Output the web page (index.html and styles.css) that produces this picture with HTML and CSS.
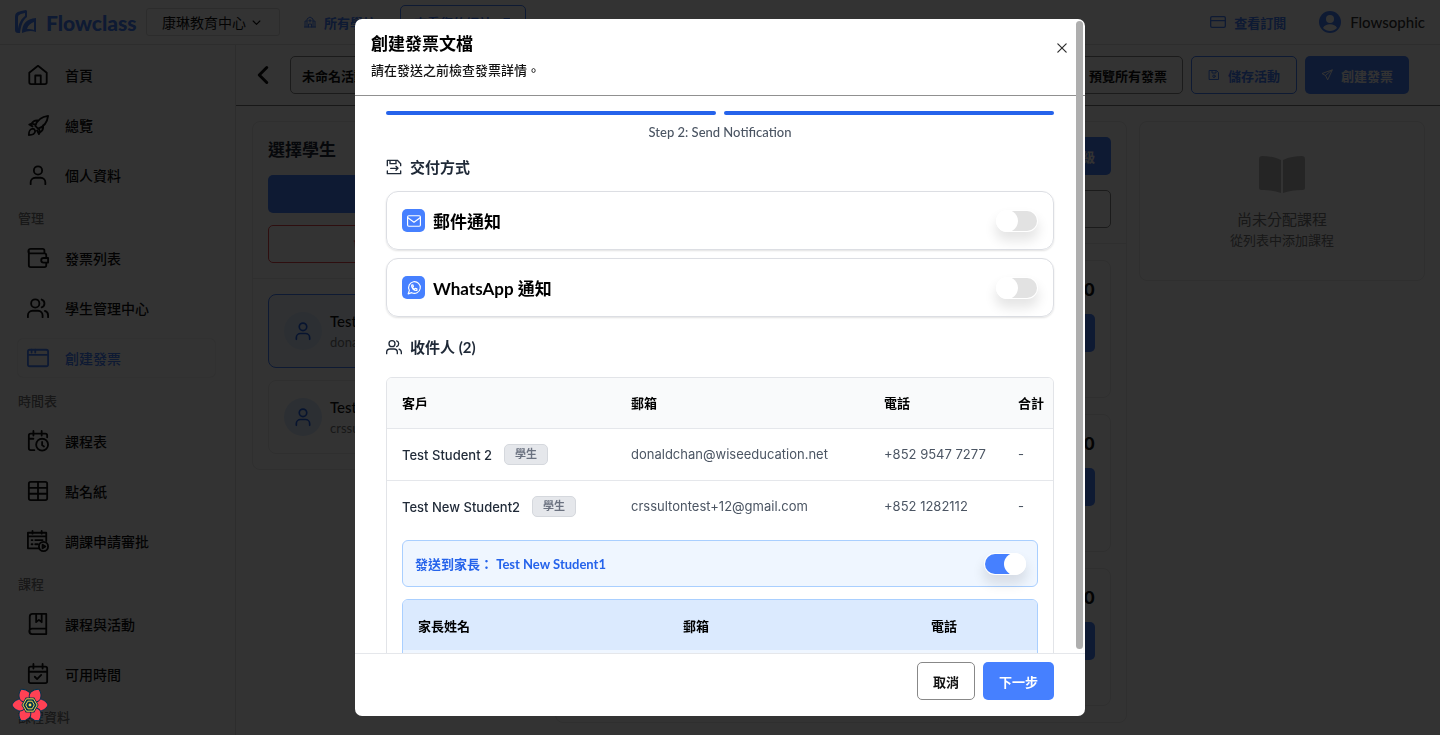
FILE: index.html
```html
<!DOCTYPE html>
<html lang="zh-Hant">
<head>
  <meta charset="UTF-8" />
  <meta name="viewport" content="width=device-width, initial-scale=1" />
  <title>Flowclass - 創建發票</title>
  <link rel="stylesheet" href="styles.css">
</head>
<body>
  <svg class="sprite" aria-hidden="true">
    <symbol id="i-home" viewBox="0 0 24 24"><path d="M2.500 9.500 12 2l9.500 7.500V20a2 2 0 0 1-2 2h-15a2 2 0 0 1-2-2zM9 22v-9.500h6V22"/></symbol>
    <symbol id="i-rocket" viewBox="0 0 24 24"><path d="M9 13c2-6 6-10 14-11-1 8-5 12-11 14zM9 13l3 3M9.500 11.500 5 10.500c1.500-3 4-4 7.500-3.500M13 15.500l1 4.500c3-1.500 4-4 3.500-7.500M14 20l-1 2-2-4M5 10.500l-2.500 1L6 13.500M6.500 16c-4 .5-4.500 3-4.500 7 4 0 6.500-.5 7-4.500-.5-1.500-1.500-2.500-2.500-2.500z"/></symbol>
    <symbol id="i-user" viewBox="0 0 24 24"><circle cx="12" cy="7" r="4.500"/><path d="M4 22v-2a5 5 0 0 1 5-5h6a5 5 0 0 1 5 5v2"/></symbol>
    <symbol id="i-wallet" viewBox="0 0 24 24"><path d="M19 7V4a2 2 0 0 0-2-2H4a2 2 0 0 0 0 5h15a2 2 0 0 1 2 2v3M2 4v16a2 2 0 0 0 2 2h15a2 2 0 0 0 2-2v-3M23 12h-5a2.500 2.500 0 0 0 0 5h5z"/></symbol>
    <symbol id="i-users" viewBox="0 0 24 24"><circle cx="9" cy="7" r="4.500"/><path d="M1 22v-2a5 5 0 0 1 5-5h6a5 5 0 0 1 5 5v2M16 2.800a4.500 4.500 0 0 1 0 8.500M23 22v-2a5 5 0 0 0-3.500-4.800"/></symbol>
    <symbol id="i-window" viewBox="0 0 24 24"><rect x="1" y="3" width="22" height="18" rx="2"/><path d="M1 8.500h22M5 3v3M9 3v3"/></symbol>
    <symbol id="i-cal-clock" viewBox="0 0 24 24"><path d="M22 8V6a2 2 0 0 0-2-2H4a2 2 0 0 0-2 2v14a2 2 0 0 0 2 2h4M7 1v5M16 1v5M2 9.500h5"/><circle cx="16.500" cy="16" r="6.500"/><path d="M16.500 13v3.500l2 1.500"/></symbol>
    <symbol id="i-table" viewBox="0 0 24 24"><rect x="2" y="2" width="20" height="20" rx="2"/><path d="M2 8.500h20M2 15h20M12 2v20"/></symbol>
    <symbol id="i-cal-play" viewBox="0 0 24 24"><path d="M13 20H1V3h20v9M1 7h20M6 1v3M16 1v3M5 11h1M9 11h8M5 15.500h1M9 15.500h3"/><circle cx="18" cy="18" r="5"/><path d="M17 16v4l3-2z"/></symbol>
    <symbol id="i-book" viewBox="0 0 24 24"><path d="M21 17H5.500a2.500 2.500 0 0 0 0 6H21V1H6a3 3 0 0 0-3 3v16M10 1v9l3-2.500 3 2.500V1"/></symbol>
    <symbol id="i-cal-check" viewBox="0 0 24 24"><rect x="2" y="4" width="20" height="18" rx="2"/><path d="M7 1v5M17 1v5M2 9.500h20M8.500 15l2.500 2.500 4.500-4.500"/></symbol>
    <symbol id="i-trash" viewBox="0 0 24 24"><path d="M2 6h20M8 6V2h8v4M4 6l1 16h14l1-16M10 11v6M14 11v6"/></symbol>
  </svg>

  <header class="topbar">
    <a href="#" class="logo">
      <svg width="24" height="24" viewBox="0 0 24 24" aria-hidden="true">
        <path class="logo-fill" d="M1 7c0-4 2-5 6-6l5-1 1 1v6c-4 3-6 8-7 16H4c-2 0-3-1-3-3z"/>
        <path class="logo-cut" d="M4 8c0-3 1-3 3-4l4-1v3C7 9 5 13 4 19z"/>
        <path class="logo-fill" d="M8 23C8 14 12 9 22 8v14c-5-2-9-1-14 1z"/>
        <path class="logo-cut" d="M13 19c1-4 4-6 7-7v8c-2-1-4-1-7-1z"/>
      </svg>
      <span>Flowclass</span>
    </a>
    <div class="center-select">
      <select aria-label="教育中心"><option>康琳教育中心</option></select>
      <svg class="icon chevron" viewBox="0 0 24 24" aria-hidden="true"><path d="m3 8 9 9 9-9"/></svg>
    </div>
    <a href="#" class="top-link schools">
      <svg class="icon icon-sm" viewBox="0 0 24 24" aria-hidden="true"><path d="M1 22h22M2 22V10h4M22 22V10h-4M6 22V6l6-4 6 4v16M9 22v-6h6v6M12 7v5M9.500 9.500h5"/></svg>
      所有學校
    </a>
    <a href="#" class="site-link">查看您的網站
      <svg class="icon icon-sm" viewBox="0 0 24 24" aria-hidden="true"><path d="M5 19 19 5M8 5h11v11"/></svg>
    </a>
    <a href="#" class="top-link plan">
      <svg class="icon icon-md" viewBox="0 0 24 24" aria-hidden="true"><rect x="1" y="4" width="22" height="16" rx="2"/><path d="M1 10h22"/></svg>
      查看訂閱
    </a>
    <a href="#" class="account">
      <svg width="22" height="22" viewBox="0 0 22 22" aria-hidden="true"><circle class="logo-fill" cx="11" cy="11" r="11"/><circle class="logo-cut" cx="11" cy="8" r="4"/><path class="logo-cut" d="M4 17c2-5 12-5 14 0-4 4-10 4-14 0z"/></svg>
      Flowsophic
    </a>
  </header>

  <div class="layout">
    <nav class="sidebar">
      <a href="#" class="nav-item"><svg class="icon"><use href="#i-home"/></svg>首頁</a>
      <a href="#" class="nav-item"><svg class="icon"><use href="#i-rocket"/></svg>總覽</a>
      <a href="#" class="nav-item"><svg class="icon"><use href="#i-user"/></svg>個人資料</a>
      <p class="nav-label">管理</p>
      <a href="#" class="nav-item"><svg class="icon"><use href="#i-wallet"/></svg>發票列表</a>
      <a href="#" class="nav-item"><svg class="icon"><use href="#i-users"/></svg>學生管理中心</a>
      <a href="#" class="nav-item active"><svg class="icon"><use href="#i-window"/></svg>創建發票</a>
      <p class="nav-label">時間表</p>
      <a href="#" class="nav-item"><svg class="icon"><use href="#i-cal-clock"/></svg>課程表</a>
      <a href="#" class="nav-item"><svg class="icon"><use href="#i-table"/></svg>點名紙</a>
      <a href="#" class="nav-item"><svg class="icon"><use href="#i-cal-play"/></svg>調課申請審批</a>
      <p class="nav-label">課程</p>
      <a href="#" class="nav-item"><svg class="icon"><use href="#i-book"/></svg>課程與活動</a>
      <a href="#" class="nav-item"><svg class="icon"><use href="#i-cal-check"/></svg>可用時間</a>
      <p class="nav-label">課程資料</p>
    </nav>

    <main class="main">
      <div class="toolbar">
        <button class="back" aria-label="返回"><svg class="icon" viewBox="0 0 24 24"><path d="M17 2 7 12l10 10"/></svg></button>
        <input class="field name-field" type="text" value="未命名活動" aria-label="活動名稱">
        <button class="btn btn-dark">預覽所有發票</button>
        <button class="btn btn-outline"><svg class="icon icon-sm" viewBox="0 0 24 24"><path d="M3 3h14l4 4v14H3zM8 3v5h8V3"/><circle cx="12" cy="14.500" r="2.500"/></svg>儲存活動</button>
        <button class="btn btn-primary"><svg class="icon icon-sm" viewBox="0 0 24 24"><path d="M22 2 2 9l7 4 4 8zM22 2 9 13"/></svg>創建發票</button>
      </div>

      <div class="columns">
        <section class="card">
          <div class="card-head">
            <h2>選擇學生</h2>
            <button class="btn btn-primary">添加學生</button>
            <button class="btn btn-red"><svg class="icon icon-sm"><use href="#i-trash"/></svg>清除已選擇</button>
          </div>
          <div class="students">
            <div class="student selected">
              <span class="avatar"><svg class="icon"><use href="#i-user"/></svg></span>
              <div><b>Test Student 2</b><small>donaldchan@wiseeducation.net</small></div>
            </div>
            <div class="student">
              <span class="avatar"><svg class="icon"><use href="#i-user"/></svg></span>
              <div><b>Test New Student2</b><small>crssultontest+12@gmail.com</small></div>
            </div>
          </div>
        </section>

        <section class="card">
          <div class="card-head class-head">
            <button class="btn btn-primary">新增班級</button>
            <input class="field" type="text" aria-label="搜尋課程">
          </div>
          <div class="classes">
            <div class="class-card"><span class="price">$0</span><button class="btn btn-primary">添加</button></div>
            <div class="class-card"><span class="price">$0</span><button class="btn btn-primary">添加</button></div>
            <div class="class-card"><span class="price">$0</span><button class="btn btn-primary">添加</button></div>
          </div>
        </section>

        <section class="card empty">
          <svg width="46" height="38" viewBox="0 0 46 38" aria-hidden="true"><path d="M0 3c0-2 1-3 3-3 7 0 13 1 19 4v33c-6-2-12-3-20-3-1 0-2-1-2-2zM46 3c0-2-1-3-3-3-7 0-13 1-19 4v33c6-2 12-3 20-3 1 0 2-1 2-2z"/></svg>
          <p class="empty-title">尚未分配課程</p>
          <p class="empty-text">從列表中添加課程</p>
        </section>
      </div>
    </main>
  </div>

  <div class="backdrop">
    <div class="modal" role="dialog" aria-modal="true" aria-labelledby="modal-title">
      <div class="modal-head">
        <div>
          <h1 id="modal-title">創建發票文檔</h1>
          <p>請在發送之前檢查發票詳情。</p>
        </div>
        <button class="close" aria-label="關閉"><svg class="icon" viewBox="0 0 24 24"><path d="m2 2 20 20M22 2 2 22"/></svg></button>
      </div>

      <div class="modal-body">
        <div class="steps"><span></span><span></span></div>
        <p class="step-text">Step 2: Send Notification</p>

        <h2 class="section-title">
          <svg class="icon" viewBox="0 0 24 24"><path d="M2 10V2h15l5 5v3M6 2v5h9V2M2 18v4h20v-4M7 14h11M15 11l3 3-3 3"/></svg>
          交付方式
        </h2>
        <label class="channel">
          <span class="channel-icon"><svg class="icon" viewBox="0 0 24 24"><rect x="1" y="3" width="22" height="18" rx="2"/><path d="m1 6 11 8 11-8"/></svg></span>
          <span class="channel-name">郵件通知</span>
          <input type="checkbox" class="switch">
        </label>
        <label class="channel">
          <span class="channel-icon"><svg class="icon" viewBox="0 0 24 24"><path d="m2 22 2-6a10 10 0 1 1 4 4z"/><path d="M8 7c-1 5 4 10 9 9v-2.500l-3-1-1 1.500c-2-1-3-2-3.500-3.500l1.500-1L10 6.500z"/></svg></span>
          <span class="channel-name">WhatsApp 通知</span>
          <input type="checkbox" class="switch">
        </label>

        <h2 class="section-title recipients-title">
          <svg class="icon"><use href="#i-users"/></svg>
          收件人 (2)
        </h2>
        <div class="table-box">
          <table class="recipients">
            <colgroup><col><col class="col-mail"><col class="col-phone"><col class="col-total"></colgroup>
            <thead>
              <tr><th>客戶</th><th>郵箱</th><th>電話</th><th>合計</th></tr>
            </thead>
            <tbody>
              <tr><td class="client"><span>Test Student 2</span><span class="badge">學生</span></td><td>donaldchan@wiseeducation.net</td><td>+852 9547 7277</td><td>-</td></tr>
              <tr><td class="client"><span>Test New Student2</span><span class="badge">學生</span></td><td>crssultontest+12@gmail.com</td><td>+852 1282112</td><td>-</td></tr>
            </tbody>
          </table>
          <div class="parents">
            <label class="parent-toggle">
              <span>發送到家長： Test New Student1</span>
              <input type="checkbox" class="switch" checked>
            </label>
            <div class="parent-box">
              <table>
                <colgroup><col><col class="col-parent-mail"><col class="col-parent-phone"></colgroup>
                <thead>
                  <tr><th>家長姓名</th><th>郵箱</th><th>電話</th></tr>
                </thead>
                <tbody>
                  <tr><td></td><td></td><td></td></tr>
                </tbody>
              </table>
            </div>
          </div>
        </div>
      </div>

      <div class="modal-foot">
        <button class="btn btn-cancel">取消</button>
        <button class="btn btn-primary">下一步</button>
      </div>
      <span class="scroll-thumb"></span>
    </div>
  </div>

  <button class="devtools" aria-label="Open React Query Devtools">
    <svg width="38" height="38" viewBox="0 0 40 40">
      <g id="petals">
        <path id="petal" d="M24 20c1-5 5-7 8-6 4 1 6 4 7 6-1 2-3 5-7 6-3 1-7-1-8-6z"/>
        <use href="#petal" transform="rotate(60 20 20)"/>
        <use href="#petal" transform="rotate(120 20 20)"/>
        <use href="#petal" transform="rotate(180 20 20)"/>
        <use href="#petal" transform="rotate(240 20 20)"/>
        <use href="#petal" transform="rotate(300 20 20)"/>
      </g>
      <path class="core" d="m11 20 4.500-8h9l4.500 8-4.500 8h-9z"/>
      <path class="ring" d="m12.500 20 3.750-6.500h7.500L27.500 20l-3.750 6.500h-7.500z"/>
      <path class="ring" d="m15.500 20 2.250-4h4.500l2.250 4-2.250 4h-4.500z"/>
      <circle class="dot" cx="20" cy="20" r="1.500"/>
    </svg>
  </button>
</body>
</html>
```
FILE: styles.css
```css
* { box-sizing: border-box; }
body { margin: 0; height: 100vh; overflow: hidden; display: flex; flex-direction: column; background: #fff; color: #111; font-family: Lato, "Noto Sans CJK TC", sans-serif; font-size: 13px; }
h1, h2, p { margin: 0; }
a { color: inherit; text-decoration: none; }
button, input, select { font: inherit; color: inherit; }
button { cursor: pointer; }

.sprite { position: absolute; width: 0; height: 0; }
.icon { width: 22px; height: 22px; flex: none; fill: none; stroke: currentColor; stroke-width: 2; stroke-linecap: round; stroke-linejoin: round; overflow: visible; }
.icon-sm { width: 12px; height: 12px; }
.icon-md { width: 16px; height: 16px; }

/* top bar */
.topbar { flex: none; height: 45px; display: flex; align-items: center; padding: 0 15px 0 14px; border-bottom: 1px solid #e0e0e0; }
.logo { display: flex; align-items: center; gap: 8px; width: 132px; color: #4680ff; font-size: 21px; font-weight: 900; }
.logo-fill { fill: #4680ff; }
.logo-cut { fill: #fff; }
.center-select { position: relative; width: 134px; }
.center-select select { width: 100%; height: 28px; padding: 0 15px; border: 1px solid #ddd; border-radius: 3px; background: #fff; appearance: none; font-size: 14px; }
.chevron { position: absolute; right: 19px; top: 10px; width: 9px; height: 9px; stroke-width: 3; pointer-events: none; }
.top-link { display: flex; align-items: center; gap: 8px; color: #4680ff; font-weight: 700; }
.schools { margin-left: 24px; }
.site-link { display: flex; align-items: center; gap: 8px; height: 34px; margin-left: 24px; padding: 0 13px; border: 1px solid #4680ff; border-radius: 5px; color: #4680ff; font-weight: 700; }
.plan { margin-left: auto; }
.account { display: flex; align-items: center; gap: 9px; margin-left: 33px; font-size: 15px; font-weight: 500; color: #333; }

/* sidebar */
.layout { flex: 1; display: flex; min-height: 0; }
.sidebar { flex: none; width: 236px; display: flex; flex-direction: column; gap: 12px; padding: 11px 20px 0 18px; border-right: 1px solid #e0e0e0; overflow: hidden; }
.nav-item { flex: none; display: flex; align-items: center; gap: 16px; height: 38px; padding: 0 9px; border-radius: 5px; font-size: 14px; font-weight: 500; }
.nav-item.active { background: #fff; color: #4680ff; box-shadow: 0 0 2px #ccc; }
.nav-label { flex: none; padding-top: 3px; line-height: 18px; font-size: 13px; font-weight: 500; color: #777; }

/* main */
.main { flex: 1; min-width: 0; }
.toolbar { display: flex; align-items: center; gap: 8px; height: 61px; padding: 0 31px 0 18px; border-bottom: 1px solid #777; }
.back { display: flex; padding: 0; border: 0; background: none; margin-right: 10px; }
.back .icon { width: 18px; height: 18px; stroke-width: 4; }
.field { height: 38px; padding: 0 11px; border: 1px solid #888; border-radius: 5px; background: #fff; font-weight: 700; }
.name-field { width: 240px; margin-right: auto; }
.btn { display: flex; align-items: center; justify-content: center; gap: 8px; height: 38px; padding: 0 15px; border: 1px solid transparent; border-radius: 5px; background: #fff; font-weight: 700; }
.btn-primary { background: #4680ff; color: #fff; }
.btn-outline { padding: 0 16px; border-color: #4680ff; color: #4680ff; }
.btn-dark { border-color: #888; }
.btn-red { border-color: #e5484d; color: #e5484d; gap: 12px; }

.columns { display: grid; grid-template-columns: 1fr 2fr 1fr; gap: 12px; align-items: start; padding: 15px 15px 12px 16px; }
.card { border: 1px solid #e8e8e8; border-radius: 8px; background: #fff; }
.card-head { display: flex; flex-direction: column; gap: 12px; padding: 15px; border-bottom: 1px solid #e8e8e8; }
.card-head h2 { font-size: 17px; line-height: 26px; color: #1f2937; }
.class-head { gap: 15px; }
.class-head .btn { align-self: flex-end; }
.students { display: flex; flex-direction: column; gap: 12px; padding: 15px; }
.student { display: flex; align-items: center; gap: 8px; height: 74px; padding: 0 15px; border: 1px solid #eaeaea; border-radius: 8px; }
.student.selected { border-color: #4680ff; background: #eff6ff; }
.student b { display: block; font-size: 15px; font-weight: 500; line-height: 22px; }
.student small { display: block; font-size: 13px; line-height: 20px; color: #777; }
.avatar { display: flex; align-items: center; justify-content: center; width: 38px; height: 38px; border-radius: 50%; background: #dbeafe; color: #2563eb; }
.avatar .icon { width: 20px; height: 20px; }
.classes { display: flex; flex-direction: column; gap: 16px; padding: 16px 15px; }
.class-card { display: flex; flex-direction: column; align-items: flex-end; gap: 9px; height: 138px; padding: 15px; border: 1px solid #e8e8e8; border-radius: 8px; }
.price { font-family: Inter, sans-serif; font-size: 17px; font-weight: 700; line-height: 29px; }
.empty { display: flex; flex-direction: column; align-items: center; height: 160px; padding-top: 34px; fill: #bbb; text-align: center; }
.empty-title { margin-top: 14px; font-size: 15px; line-height: 22px; color: #777; }
.empty-text { font-size: 13px; line-height: 20px; color: #777; }

/* modal */
.backdrop { position: fixed; inset: 0; display: flex; justify-content: center; padding: 19px; background: rgba(0, 0, 0, 0.8); }
.modal { position: relative; display: flex; flex-direction: column; width: 100%; max-width: 730px; border-radius: 7px; background: #fff; overflow: hidden; }
.modal-head { flex: none; display: flex; justify-content: space-between; padding: 12px 16px 14px; border-bottom: 1px solid #909090; }
.modal-head h1 { font-size: 17px; line-height: 26px; color: #000; }
.modal-head p { margin-top: 2px; line-height: 22px; font-weight: 500; }
.close { align-self: flex-start; display: flex; margin-top: 10px; padding: 2px; border: 0; background: none; color: #333; }
.close .icon { width: 10px; height: 10px; stroke-width: 3; }
.modal-body { flex: 1; min-height: 0; padding: 15px 31px 0; overflow: hidden; }
.steps { display: flex; gap: 8px; }
.steps span { flex: 1; height: 4px; border-radius: 2px; background: #2563eb; }
.step-text { margin-top: 7px; line-height: 20px; text-align: center; font-weight: 500; color: #4b5563; }
.section-title { display: flex; align-items: center; gap: 8px; margin: 14px 0 13px; font-size: 15px; line-height: 22px; color: #1f2937; }
.section-title .icon { width: 16px; height: 16px; }
.recipients-title { margin: 19px 0; }
.channel { display: flex; align-items: center; gap: 8px; height: 59px; margin-bottom: 8px; padding: 0 16px 0 15px; border: 1px solid #dcdee3; border-radius: 12px; box-shadow: 0 1px 2px rgba(0, 0, 0, 0.12); }
.channel-icon { display: flex; align-items: center; justify-content: center; width: 23px; height: 23px; border-radius: 5px; background: #4680ff; color: #fff; }
.channel-icon .icon { width: 14px; height: 14px; }
.channel-name { flex: 1; font-size: 17px; font-weight: 700; color: #000; }

.switch { flex: none; display: flex; align-items: center; width: 40px; height: 20px; margin: 0; border-radius: 10px; background: #e2e2e2; appearance: none; box-shadow: 0 0 0 1px #fff, 0 8px 12px 2px rgba(0, 0, 0, 0.1); }
.switch::before { content: ""; width: 20px; height: 20px; border-radius: 50%; background: #fff; box-shadow: 0 0 0 1px #fff; }
.switch:checked { justify-content: flex-end; background: #4680ff; }

.table-box { border: 1px solid #e2e4e8; border-radius: 6px; overflow: hidden; }
table { width: 100%; border-collapse: collapse; table-layout: fixed; }
th, td { padding: 0 0 0 15px; text-align: left; white-space: nowrap; }
th { height: 50px; color: #000; }
td { height: 52px; font-family: Inter, "Noto Sans CJK TC", sans-serif; color: #4b5563; }
.recipients thead { background: #f9fafb; }
.recipients tbody tr { border-top: 1px solid #e5e7eb; }
.client { font-weight: 500; color: #1f2937; }
.client span { vertical-align: middle; }
.badge { display: inline-block; margin-left: 12px; padding: 0 10px; border: 1px solid #d5d8dd; border-radius: 5px; background: #e5e7eb; font-size: 11px; font-weight: 700; line-height: 19px; color: #6b7280; }
.col-mail { width: 253px; }
.col-phone { width: 134px; }
.col-total { width: 50px; }
.parents { padding: 8px 15px 16px; }
.parent-toggle { display: flex; align-items: center; justify-content: space-between; height: 47px; padding: 0 12px; border: 1px solid #a9cfff; border-radius: 6px; background: #eff6ff; color: #2563eb; font-weight: 700; }
.parent-box { margin-top: 12px; border: 1px solid #a9cfff; border-radius: 6px; background: #eff6ff; overflow: hidden; }
.parent-box thead { background: #dbeafe; }
.col-parent-mail { width: 248px; }
.col-parent-phone { width: 121px; }

.modal-foot { flex: none; display: flex; justify-content: flex-end; gap: 8px; padding: 8px 31px 16px; border-top: 1px solid #e5e7eb; }
.btn-cancel { border-color: #888; }
.scroll-thumb { position: absolute; top: 2px; bottom: 67px; right: 2px; width: 7px; border-radius: 4px; background: #aeaeae; }

.devtools { position: fixed; left: 11px; bottom: 11px; display: flex; padding: 0; border: 0; background: none; }
#petals { fill: #ff4154; stroke: #00344f; stroke-width: 1; }
.core { fill: #00344f; }
.ring { fill: none; stroke: #ffd94c; stroke-width: 1; }
.dot { fill: #ffd94c; }
```
